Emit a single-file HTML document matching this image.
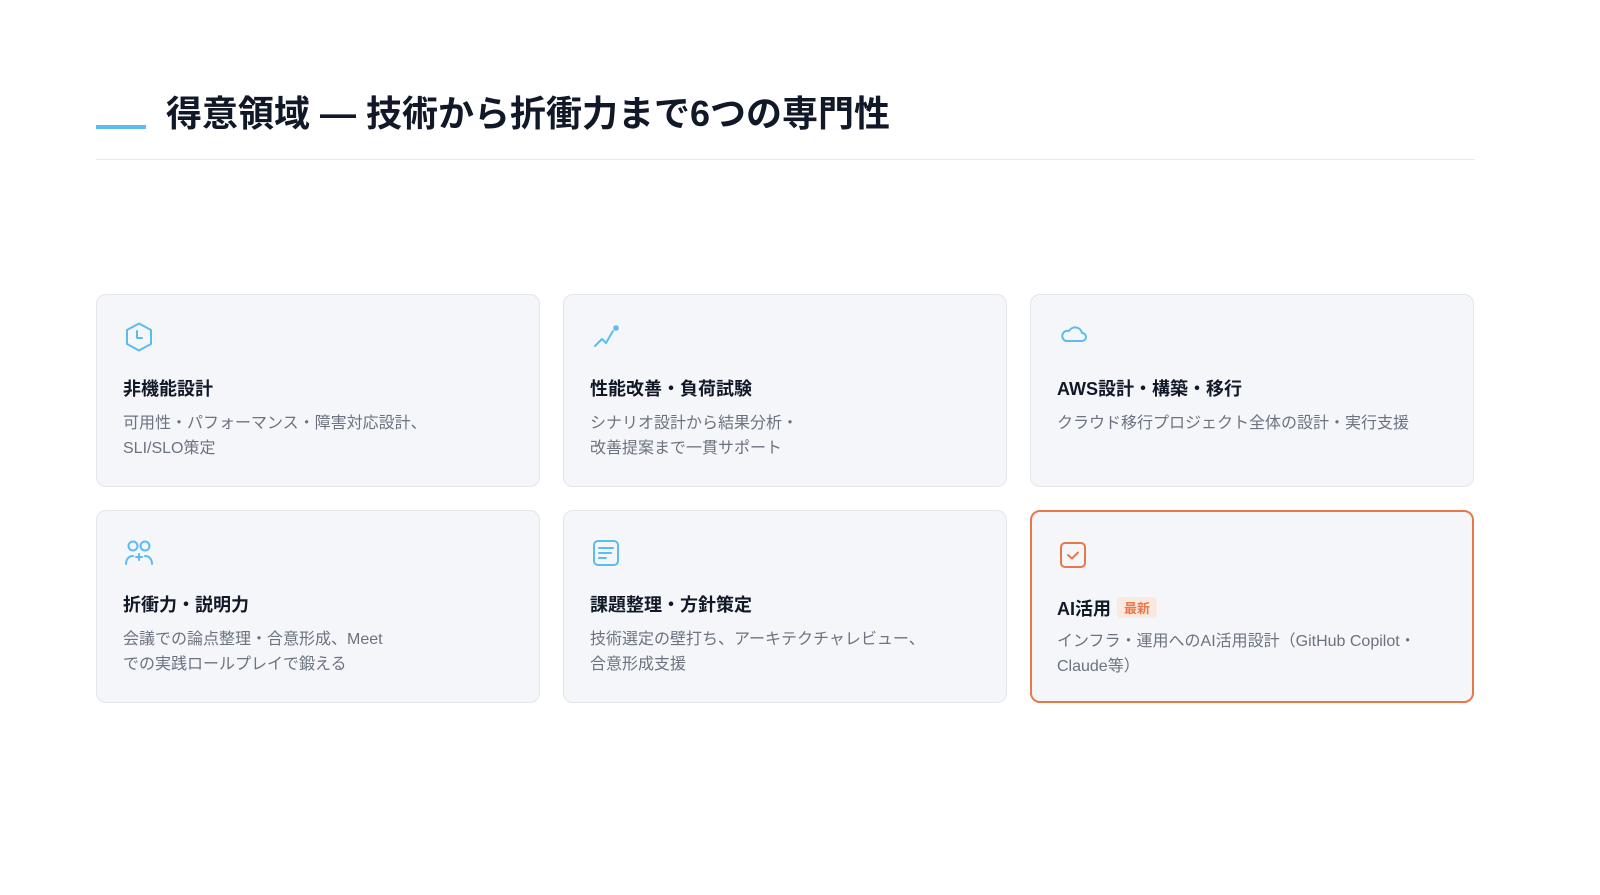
<!DOCTYPE html>
<html><head><meta charset="utf-8"><style>
*{margin:0;padding:0;box-sizing:border-box}
body{width:1600px;height:895px;background:#fff;font-family:"Liberation Sans","Noto Sans CJK JP",sans-serif;position:relative;overflow:hidden}
.acc{position:absolute;left:96px;top:125px;width:50px;height:4px;background:#5bbcf0}
h1{position:absolute;left:166px;top:90px;font-size:36px;font-weight:700;color:#111827;letter-spacing:0px;line-height:48px}
.div{position:absolute;left:96px;top:159px;width:1379px;height:1px;background:#e8eaee}
.card{position:absolute;width:444px;height:193px;background:#f5f6f9;border:1px solid #e3e5ea;border-radius:10px;padding:0 26px}
.card svg{position:absolute;left:26px;top:26px}
.t{position:absolute;left:26px;top:80px;font-size:18px;font-weight:700;color:#111827}
.d{position:absolute;left:26px;top:116px;font-size:16px;color:#6b7280;line-height:25px;width:400px}
.hl{border:2px solid #e8784a;padding:0}
.badge{display:inline-block;background:#fbe9e1;color:#e8784a;font-size:13px;padding:1px 7px;border-radius:4px;margin-left:6px;vertical-align:2px}
</style></head><body>
<div class="acc"></div>
<h1>得意領域 — 技術から折衝力まで6つの専門性</h1>
<div class="div"></div>

<div class="card" style="left:96px;top:294px">
<svg width="32" height="32" viewBox="0 0 32 32" fill="none" stroke="#5bbcf0" stroke-width="2" stroke-linejoin="round" stroke-linecap="round"><path d="M16 2.5 L28 9 V23 L16 29.5 L4 23 V9 Z"/><path d="M14 10v7h5"/></svg>
<div class="t">非機能設計</div>
<div class="d">可用性・パフォーマンス・障害対応設計、<br>SLI/SLO策定</div></div>

<div class="card" style="left:563px;top:294px">
<svg width="32" height="32" viewBox="0 0 32 32" fill="none" stroke="#5bbcf0" stroke-width="2" stroke-linecap="round" stroke-linejoin="round"><path d="M5 25l7-7 4 4 7-12"/><circle cx="26" cy="7" r="1.8" fill="#5bbcf0"/></svg>
<div class="t">性能改善・負荷試験</div>
<div class="d">シナリオ設計から結果分析・<br>改善提案まで一貫サポート</div></div>

<div class="card" style="left:1030px;top:294px">
<svg width="32" height="32" viewBox="0 0 32 32" fill="none" stroke="#5bbcf0" stroke-width="2" stroke-linejoin="round"><path d="M9 20h16a4 4 0 0 0 0-8 7 7 0 0 0-13-2 5 5 0 0 0-3 10z"/></svg>
<div class="t">AWS設計・構築・移行</div>
<div class="d">クラウド移行プロジェクト全体の設計・実行支援</div></div>

<div class="card" style="left:96px;top:510px">
<svg width="32" height="32" viewBox="0 0 32 32" fill="none" stroke="#5bbcf0" stroke-width="2" stroke-linecap="round"><circle cx="10" cy="9" r="4.5"/><circle cx="22" cy="9" r="4.5"/><path d="M3 27c0-5 3-8 7-8M29 27c0-5-3-8-7-8M13 20h6M16 17v6"/></svg>
<div class="t">折衝力・説明力</div>
<div class="d">会議での論点整理・合意形成、Meet<br>での実践ロールプレイで鍛える</div></div>

<div class="card" style="left:563px;top:510px">
<svg width="32" height="32" viewBox="0 0 32 32" fill="none" stroke="#5bbcf0" stroke-width="2" stroke-linecap="round"><rect x="4" y="4" width="24" height="24" rx="4"/><path d="M9 11h14M9 16h12M9 21h7"/></svg>
<div class="t">課題整理・方針策定</div>
<div class="d">技術選定の壁打ち、アーキテクチャレビュー、<br>合意形成支援</div></div>

<div class="card hl" style="left:1030px;top:510px">
<svg width="32" height="32" viewBox="0 0 32 32" fill="none" stroke="#e8784a" stroke-width="2" stroke-linecap="round" stroke-linejoin="round" style="left:25px;top:26px"><rect x="4" y="5" width="24" height="24" rx="4"/><path d="M11 17l4 3.5 6-6"/></svg>
<div class="t" style="left:25px;top:83px">AI活用<span class="badge">最新</span></div>
<div class="d" style="left:25px;top:117px;width:410px">インフラ・運用へのAI活用設計（GitHub Copilot・<br>Claude等）</div></div>
</body></html>
